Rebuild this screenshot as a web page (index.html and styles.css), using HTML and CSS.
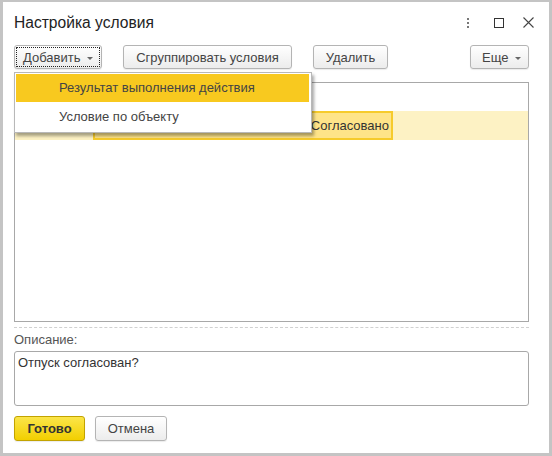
FILE: index.html
```html
<!DOCTYPE html>
<html lang="ru">
<head>
    <meta charset="utf-8">
    <title>Настройка условия</title>
    <link rel="stylesheet" href="styles.css">
</head>
<body>
<div class="window">
    <div class="titlebar">
        <h1 class="title">Настройка условия</h1>
        <div class="title-tools">
            <span class="tool-dots"><i></i><i></i><i></i></span>
            <span class="tool-max"></span>
            <svg class="tool-close" width="11" height="11" viewBox="0 0 11 11"><path d="M0.5 0.5L10.5 10.5M10.5 0.5L0.5 10.5" stroke="#444" stroke-width="1.1" fill="none"/></svg>
        </div>
    </div>

    <div class="toolbar">
        <button class="btn btn-add">Добавить <span class="caret"></span></button>
        <button class="btn btn-group">Сгруппировать условия</button>
        <button class="btn btn-delete">Удалить</button>
        <button class="btn btn-more">Еще <span class="caret"></span></button>

        <div class="menu">
            <div class="menu-item active">Результат выполнения действия</div>
            <div class="menu-item">Условие по объекту</div>
        </div>
    </div>

    <div class="tree">
        <div class="tree-row">
            <div class="tree-gap"></div>
            <div class="tree-cell">Согласовано</div>
        </div>
    </div>

    <div class="splitter"></div>

    <label class="field-label">Описание:</label>
    <div class="memo">Отпуск согласован?</div>

    <div class="footer">
        <button class="btn btn-primary">Готово</button>
        <button class="btn btn-cancel">Отмена</button>
    </div>
</div>
</body>
</html>
```

FILE: styles.css
```css
* {
    box-sizing: border-box;
}
body {
    margin: 0;
    font-family: "Liberation Sans", Arial, sans-serif;
    font-size: 13px;
    color: #333;
}
.window {
    width: 552px;
    height: 456px;
    border: 3px solid #c4c4c4;
    border-top-width: 2px;
    background: #fff;
    padding: 0 20px 0 11px;
    display: flex;
    flex-direction: column;
}

/* заголовок */
.titlebar {
    height: 43px;
    display: flex;
    align-items: center;
    justify-content: space-between;
    padding-bottom: 2px;
}
.title {
    margin: 0;
    font-size: 15.6px;
    font-weight: normal;
    color: #222;
}
.title-tools {
    display: flex;
    align-items: center;
    margin-right: -5px;
}
.tool-dots {
    display: flex;
    flex-direction: column;
    gap: 2px;
    width: 3px;
    margin-right: 24px;
}
.tool-dots i {
    display: block;
    width: 2px;
    height: 2px;
    background: #777;
}
.tool-max {
    width: 10px;
    height: 10px;
    border: 1px solid #333;
    margin-right: 19px;
}

/* панель команд */
.toolbar {
    position: relative;
    display: flex;
    align-items: center;
    height: 24px;
}
.btn {
    height: 24px;
    padding: 0 11px;
    font-family: inherit;
    font-size: 13px;
    color: #444;
    background: linear-gradient(#ffffff, #ececec);
    border: 1px solid #b4b4b4;
    border-radius: 3px;
    box-shadow: 0 1px 1px rgba(0, 0, 0, 0.08);
}
.btn-add {
    width: 88px;
    padding: 0 4px;
    outline: 1px dotted #222;
    outline-offset: -3px;
}
.btn-group {
    margin-left: 21px;
    width: 169px;
}
.btn-delete {
    margin-left: 21px;
    width: 75px;
}
.btn-more {
    margin-left: auto;
    width: 59px;
    padding: 0 6px 0 10px;
}
.caret {
    display: inline-block;
    width: 0;
    height: 0;
    margin-left: 3px;
    vertical-align: 2px;
    border-left: 3px solid transparent;
    border-right: 3px solid transparent;
    border-top: 3px solid #666;
}

/* выпадающее меню */
.menu {
    position: absolute;
    left: 0;
    top: 27px;
    width: 298px;
    background: #fff;
    border: 1px solid #b8b8b8;
    box-shadow: 2px 3px 3px rgba(0, 0, 0, 0.35);
    z-index: 2;
}
.menu-item {
    height: 30px;
    line-height: 29px;
    padding-left: 44px;
    color: #444;
}
.menu-item.active {
    background: #f8c91f;
    margin: 1px 2px 0 1px;
    height: 28px;
    line-height: 28px;
    padding-left: 43px;
}

/* дерево условий */
.tree {
    margin-top: 13px;
    height: 240px;
    border: 1px solid #a8a8a8;
    padding-top: 28px;
}
.tree-row {
    display: flex;
    height: 29px;
    background: #fdf2c4;
}
.tree-gap {
    width: 78px;
}
.tree-cell {
    width: 300px;
    border: 2px solid #f6cb2c;
    background: #fee489;
    text-align: right;
    padding-right: 2px;
    line-height: 25px;
    color: #333;
}

.splitter {
    margin-top: 5px;
    border-top: 1px dashed #d0d0d0;
}
.field-label {
    margin-top: 4px;
    color: #555;
}
.memo {
    margin-top: 4px;
    height: 55px;
    border: 1px solid #a8a8a8;
    border-radius: 3px;
    padding: 3px 3px;
    color: #333;
}

.footer {
    display: flex;
    margin-top: 10px;
}
.btn-primary {
    width: 71px;
    height: 25px;
    font-weight: bold;
    color: #333;
    background: linear-gradient(#fbe54a, #f2cf00);
    border-color: #c2a300;
}
.btn-cancel {
    margin-left: 10px;
    width: 72px;
    height: 25px;
}
```
